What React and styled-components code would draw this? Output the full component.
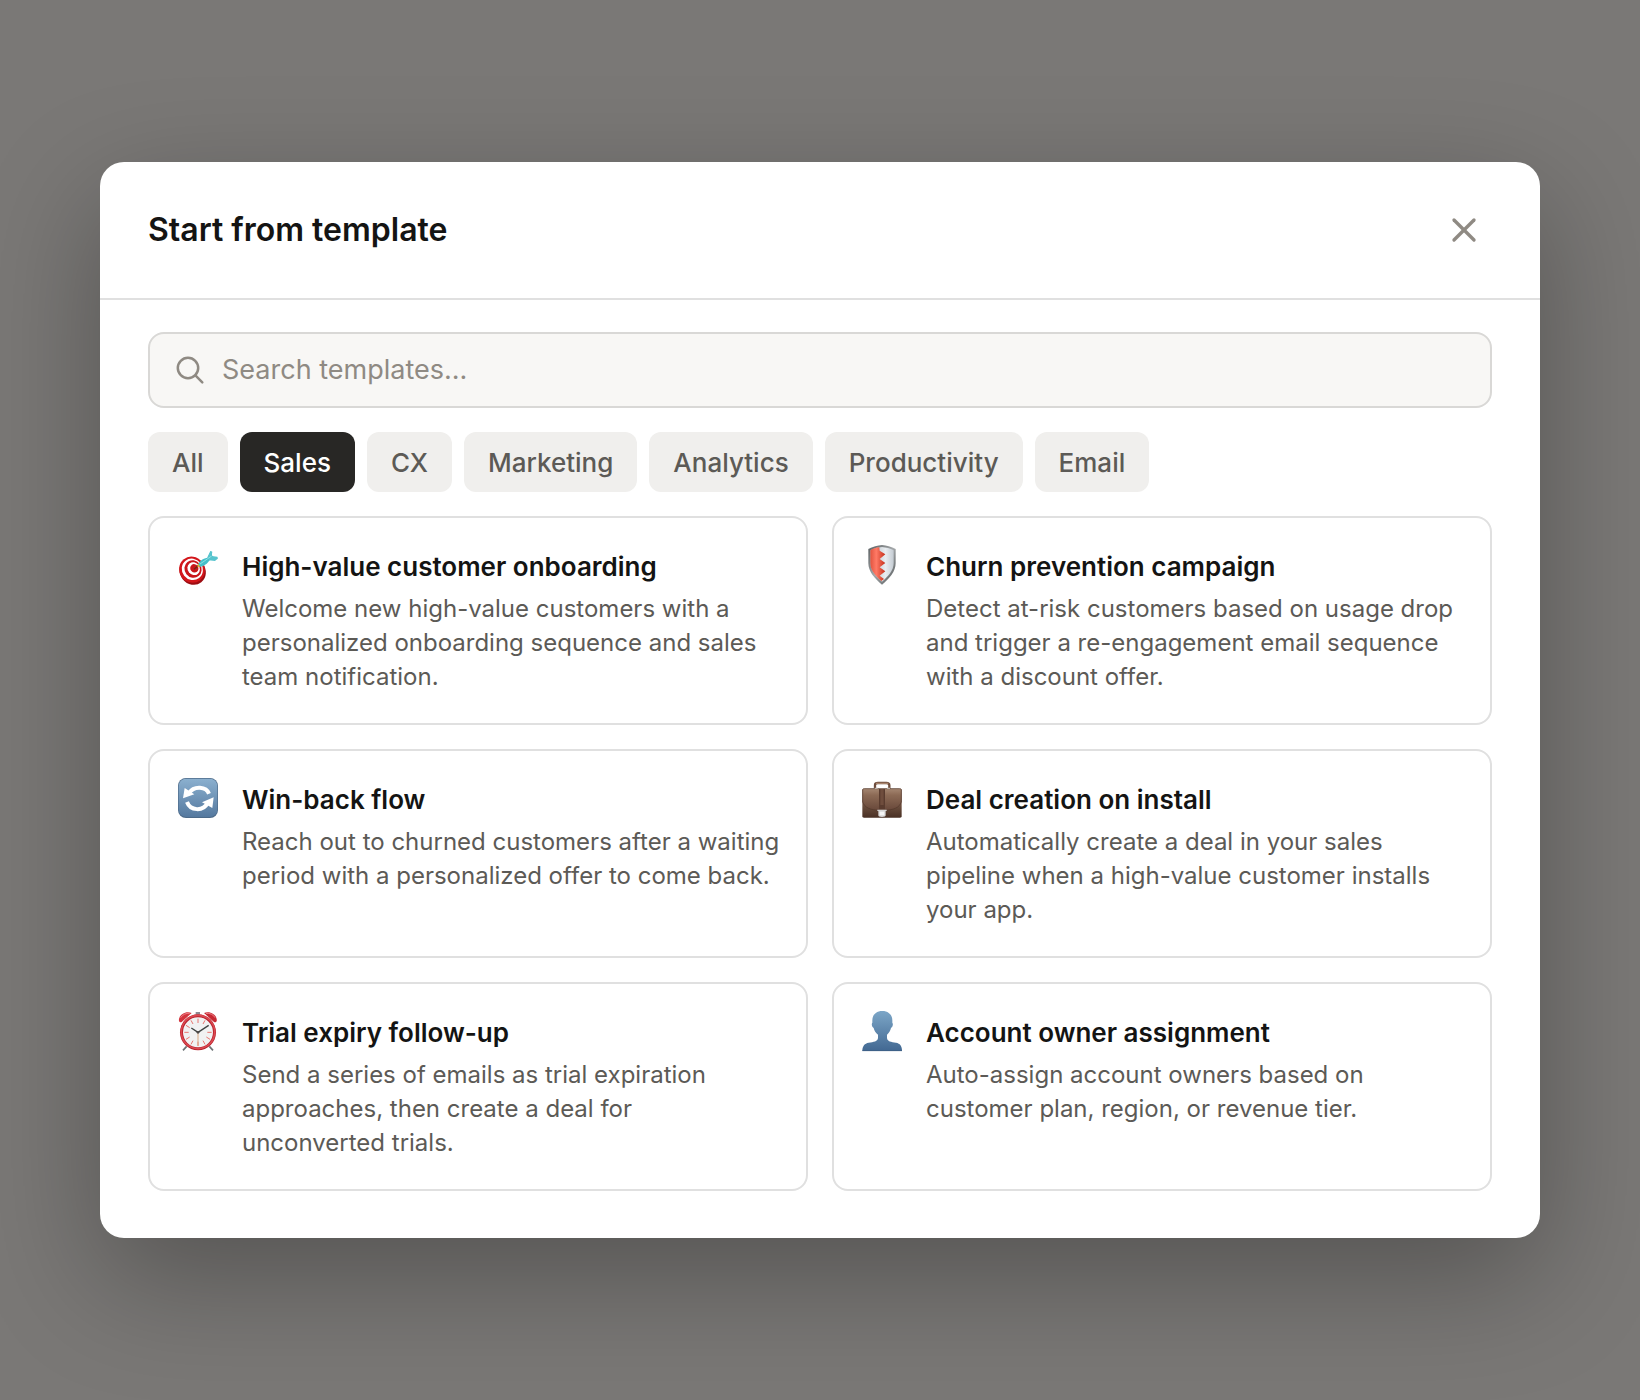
import React, { useState } from 'react';
import styled, { createGlobalStyle } from 'styled-components';
import { X } from 'lucide-react';

const GlobalStyle = createGlobalStyle`
  * {
    box-sizing: border-box;
  }

  body {
    margin: 0;
    font-family: Inter, "Liberation Sans", sans-serif;
    color: #141413;
    background: #7a7876;
  }

  button,
  input {
    font-family: inherit;
  }
`;

const Overlay = styled.div`
  display: flex;
  align-items: center;
  justify-content: center;
  min-height: 100vh;
  padding: 48px 100px;
`;

const Modal = styled.div`
  width: 100%;
  max-width: 1440px;
  background: #ffffff;
  border-radius: 24px;
  box-shadow: 0 40px 120px rgba(0, 0, 0, 0.3);
`;

const ModalHeader = styled.header`
  display: flex;
  align-items: center;
  justify-content: space-between;
  padding: 40px 48px;
  border-bottom: 2px solid #e0e0e0;
`;

const ModalTitle = styled.h1`
  margin: 0;
  font-size: 32px;
  font-weight: 600;
  line-height: 40px;
`;

const CloseButton = styled.button`
  display: flex;
  align-items: center;
  justify-content: center;
  width: 56px;
  height: 56px;
  padding: 0;
  border: none;
  border-radius: 12px;
  background: none;
  color: #8f8a83;
  cursor: pointer;
`;

const ModalBody = styled.div`
  display: flex;
  flex-direction: column;
  gap: 24px;
  padding: 32px 48px 47px;
`;

const SearchBox = styled.label`
  display: flex;
  align-items: center;
  gap: 16px;
  height: 76px;
  padding: 0 24px;
  border: 2px solid #d9d8d6;
  border-radius: 16px;
  background: #f8f7f5;
  color: #8f8a83;
`;

const SearchInput = styled.input`
  flex: 1;
  min-width: 0;
  padding: 0;
  border: none;
  outline: none;
  background: none;
  color: #141413;
  font-size: 27px;
  line-height: 36px;

  &::placeholder {
    color: #8f8a83;
    opacity: 1;
  }
`;

const Categories = styled.div`
  display: flex;
  flex-wrap: wrap;
  gap: 12px;
`;

const CategoryButton = styled.button`
  height: 60px;
  padding: 0 24px;
  border: none;
  border-radius: 12px;
  background: ${props => (props.$active ? '#282725' : '#f0efed')};
  color: ${props => (props.$active ? '#ffffff' : '#5c5a56')};
  font-size: 26px;
  font-weight: 500;
  cursor: pointer;
`;

const TemplateGrid = styled.div`
  display: grid;
  grid-template-columns: 1fr 1fr;
  gap: 24px;
`;

const TemplateCardCss = styled.button`
  display: flex;
  align-items: flex-start;
  gap: 24px;
  padding: 28px 26px 29px 28px;
  border: 2px solid #e0e0e0;
  border-radius: 16px;
  background: #ffffff;
  text-align: left;
  cursor: pointer;
`;

const CardIcon = styled.svg`
  flex: none;
  width: 40px;
  height: 40px;
  overflow: visible;
`;

const CardText = styled.span`
  flex: 1;
  min-width: 0;
`;

const CardTitle = styled.span`
  display: block;
  margin-bottom: 5px;
  color: #141413;
  font-size: 26px;
  font-weight: 600;
  line-height: 41px;
`;

const CardDescription = styled.span`
  display: block;
  color: #5c5a56;
  font-size: 24px;
  line-height: 34px;
`;

function SearchIcon() {
  return (
    <svg width="32" height="32" viewBox="0 0 32 32" fill="none" stroke="currentColor" strokeWidth="2.5" strokeLinecap="round" aria-hidden="true">
      <circle cx="14" cy="14" r="10.2" />
      <path d="M21.4 21.4L28.3 28.3" />
    </svg>
  );
}

function TargetIcon() {
  return (
    <CardIcon viewBox="39 33 120 120" aria-hidden="true">
      <ellipse cx="83" cy="109" rx="38" ry="42" transform="rotate(-38 83 109)" fill="#9c0d12" />
      <ellipse cx="81" cy="104" rx="38" ry="40" transform="rotate(-38 81 104)" fill="#d3161b" />
      <ellipse cx="82" cy="103" rx="31" ry="33" transform="rotate(-38 82 103)" fill="#ffffff" />
      <ellipse cx="84" cy="102" rx="25" ry="27" transform="rotate(-38 84 102)" fill="#c9161b" />
      <ellipse cx="86" cy="101" rx="18" ry="20" transform="rotate(-38 86 101)" fill="#ffffff" />
      <ellipse cx="88" cy="100" rx="12" ry="13" transform="rotate(-38 88 100)" fill="#c9161b" />
      <path d="M87 103L101 91" stroke="#6b2a16" strokeWidth="4" />
      <path d="M97 96L100 85L108 94Z" fill="#e5b51e" />
      <path d="M100 88C104 76 116 70 128 68L134 75C128 86 116 94 106 95Z" fill="#45bfca" />
      <path d="M127 70L138 47L142 64L159 72L132 76Z" fill="#2fa3b1" />
      <path d="M127 67L136 48L142 50L140 63L157 65L159 70L150 78L131 76Z" fill="#57c4ce" />
      <path d="M105 87L140 63" stroke="#8fe0e3" strokeWidth="3" />
    </CardIcon>
  );
}

function ShieldIcon() {
  return (
    <CardIcon viewBox="36 33 120 120" aria-hidden="true">
      <defs>
        <linearGradient id="shield-rim" x1="0" y1="0" x2="1" y2="1">
          <stop offset="0" stopColor="#5a5f61" />
          <stop offset="0.5" stopColor="#a3a7a9" />
          <stop offset="1" stopColor="#4e5355" />
        </linearGradient>
        <linearGradient id="shield-silver" x1="0" y1="0" x2="1" y2="0">
          <stop offset="0" stopColor="#aeb6bd" />
          <stop offset="0.65" stopColor="#e9edf1" />
          <stop offset="1" stopColor="#c5ccd3" />
        </linearGradient>
        <linearGradient id="shield-red" x1="0" y1="0" x2="1" y2="0">
          <stop offset="0" stopColor="#e2543f" />
          <stop offset="0.4" stopColor="#ff7a66" />
          <stop offset="1" stopColor="#c52f1b" />
        </linearGradient>
      </defs>
      <path d="M96 30C109 31 124 35 137 42V84C137 111 117 131 96 149C75 131 55 111 55 84V42C68 35 83 31 96 30Z" fill="url(#shield-rim)" />
      <path d="M96 36C108 37 121 40 131 46V84C131 107 114 124 96 140C78 124 61 107 61 84V46C71 40 84 37 96 36Z" fill="url(#shield-silver)" />
      <path d="M88 37C78 38 69 41 61 46V84C61 107 78 124 94 138L102 132L89 122L106 109L89 97L106 84L89 72L106 58L89 47Z" fill="url(#shield-red)" />
    </CardIcon>
  );
}

function RefreshIcon() {
  return (
    <CardIcon viewBox="39 39 120 120" aria-hidden="true">
      <defs>
        <linearGradient id="refresh-tile" x1="0" y1="0" x2="0" y2="1">
          <stop offset="0" stopColor="#8bb0cf" />
          <stop offset="1" stopColor="#55799f" />
        </linearGradient>
      </defs>
      <rect x="39" y="36" width="120" height="120" rx="24" fill="#4c6a89" />
      <rect x="41" y="38" width="116" height="115" rx="22" fill="url(#refresh-tile)" />
      <path d="M132 83C124 62 88 57 71 82" fill="none" stroke="#ffffff" strokeWidth="12" />
      <path d="M54 97L59 66L88 85Z" fill="#ffffff" />
      <path d="M66 108C76 135 114 137 128 111" fill="none" stroke="#ffffff" strokeWidth="12" />
      <path d="M146 94L142 126L111 109Z" fill="#ffffff" />
    </CardIcon>
  );
}

function BriefcaseIcon() {
  return (
    <CardIcon viewBox="36 39 120 120" aria-hidden="true">
      <defs>
        <linearGradient id="case-body" x1="0" y1="0" x2="0" y2="1">
          <stop offset="0" stopColor="#8d6c58" />
          <stop offset="0.35" stopColor="#80604d" />
          <stop offset="1" stopColor="#493024" />
        </linearGradient>
        <linearGradient id="case-flap" x1="0" y1="0" x2="0" y2="1">
          <stop offset="0" stopColor="#a58671" />
          <stop offset="0.3" stopColor="#8c6a55" />
          <stop offset="1" stopColor="#68483a" />
        </linearGradient>
      </defs>
      <path d="M75 69V57C75 52 79 51 84 51H109C115 51 118 53 118 58V69" fill="none" stroke="#6d4c3c" strokeWidth="7" />
      <path d="M78 52H115" stroke="#a7836c" strokeWidth="4" />
      <path d="M41 68H151C154 68 155 70 155 73V151C155 154 153 155 150 155H42C39 155 37 154 37 151V73C37 70 38 68 41 68Z" fill="url(#case-body)" />
      <path d="M38 72C38 69 40 68 43 68H149C152 68 154 69 154 72V108C148 124 134 133 96 133C58 133 44 124 38 108Z" fill="url(#case-flap)" stroke="#52372b" strokeWidth="2" />
      <rect x="87" y="69" width="18" height="61" fill="#5a3c2f" />
      <rect x="91" y="69" width="10" height="48" fill="#6f4d3d" />
      <path d="M82 131H110V135H107V148C107 152 104 153 96 153C88 153 85 152 85 148V135H82Z" fill="#d6d5d5" />
      <rect x="89" y="137" width="14" height="11" fill="#f6f6f6" />
      <path d="M74 67H83M111 67H120" stroke="#b9afa9" strokeWidth="4" />
    </CardIcon>
  );
}

function AlarmIcon() {
  return (
    <CardIcon viewBox="39 36 120 120" aria-hidden="true">
      <path d="M65 139L54 151M133 139L144 151" stroke="#6c7275" strokeWidth="5" />
      <path d="M92 36H105V44H92Z" fill="#8d8992" />
      <path d="M42 63C39 47 60 31 80 39L50 66Q44 69 42 63Z" fill="#d3343d" />
      <path d="M155 63C158 47 137 31 117 39L147 66Q153 69 155 63Z" fill="#c62832" />
      <path d="M47 53C53 43 64 39 74 40M123 40C134 39 145 43 150 53" fill="none" stroke="#ee8088" strokeWidth="3" />
      <circle cx="99" cy="97" r="54" fill="#b51f2a" />
      <circle cx="99" cy="96" r="50" fill="none" stroke="#dc4850" strokeWidth="5" />
      <circle cx="99" cy="97" r="45" fill="#f1f2f2" />
      <path d="M99 56V69M99 125V138M58 97H71M127 97H140M78 61L84 72M120 61L114 72M63 76L74 83M63 118L74 111M78 133L84 122M120 133L114 122M135 118L124 111" stroke="#e8756f" strokeWidth="3" />
      <path d="M99 97V137" stroke="#d9aa83" strokeWidth="3" />
      <path d="M79 84L99 97L131 76" fill="none" stroke="#3f4443" strokeWidth="4" />
      <circle cx="99" cy="97" r="4" fill="#4c4a49" />
    </CardIcon>
  );
}

function PersonIcon() {
  return (
    <CardIcon viewBox="36 36 120 120" aria-hidden="true">
      <defs>
        <linearGradient id="person-fill" x1="0" y1="0" x2="0" y2="1">
          <stop offset="0" stopColor="#7ca6c7" />
          <stop offset="1" stopColor="#426892" />
        </linearGradient>
      </defs>
      <path d="M97 33C115 33 127 44 127 61V68C130 70 129 82 123 84C121 93 117 99 111 104V113C111 124 124 126 138 128C150 130 156 138 156 153H37C37 138 44 130 56 128C70 126 84 124 84 113V104C77 99 73 93 71 84C65 82 64 70 67 68V61C67 44 79 33 97 33Z" fill="url(#person-fill)" />
      <path d="M37 152H156" stroke="#3c5c80" strokeWidth="2" />
    </CardIcon>
  );
}

const categories = ['All', 'Sales', 'CX', 'Marketing', 'Analytics', 'Productivity', 'Email'];

const templates = [
  {
    title: 'High-value customer onboarding',
    description: 'Welcome new high-value customers with a personalized onboarding sequence and sales team notification.',
    Icon: TargetIcon,
  },
  {
    title: 'Churn prevention campaign',
    description: 'Detect at-risk customers based on usage drop and trigger a re-engagement email sequence with a discount offer.',
    Icon: ShieldIcon,
  },
  {
    title: 'Win-back flow',
    description: 'Reach out to churned customers after a waiting period with a personalized offer to come back.',
    Icon: RefreshIcon,
  },
  {
    title: 'Deal creation on install',
    description: 'Automatically create a deal in your sales pipeline when a high-value customer installs your app.',
    Icon: BriefcaseIcon,
  },
  {
    title: 'Trial expiry follow-up',
    description: 'Send a series of emails as trial expiration approaches, then create a deal for unconverted trials.',
    Icon: AlarmIcon,
  },
  {
    title: 'Account owner assignment',
    description: 'Auto-assign account owners based on customer plan, region, or revenue tier.',
    Icon: PersonIcon,
  },
];

function TemplateCard({ template }) {
  const { title, description, Icon } = template;
  return (
    <TemplateCardCss type="button">
      <Icon />
      <CardText>
        <CardTitle>{title}</CardTitle>
        <CardDescription>{description}</CardDescription>
      </CardText>
    </TemplateCardCss>
  );
}

function App() {
  const [category, setCategory] = useState('Sales');
  const [query, setQuery] = useState('');

  const visible = templates.filter(template =>
    template.title.toLowerCase().includes(query.toLowerCase())
  );

  return (
    <>
      <GlobalStyle />
      <Overlay>
        <Modal role="dialog" aria-modal="true" aria-labelledby="modal-title">
          <ModalHeader>
            <ModalTitle id="modal-title">Start from template</ModalTitle>
            <CloseButton type="button" aria-label="Close">
              <X size={40} strokeWidth={2} />
            </CloseButton>
          </ModalHeader>
          <ModalBody>
            <SearchBox>
              <SearchIcon />
              <SearchInput
                type="text"
                aria-label="Search templates"
                placeholder="Search templates..."
                value={query}
                onChange={e => setQuery(e.target.value)}
              />
            </SearchBox>
            <Categories>
              {categories.map(name => (
                <CategoryButton
                  key={name}
                  type="button"
                  $active={name === category}
                  aria-pressed={name === category}
                  onClick={() => setCategory(name)}
                >
                  {name}
                </CategoryButton>
              ))}
            </Categories>
            <TemplateGrid>
              {visible.map(template => (
                <TemplateCard key={template.title} template={template} />
              ))}
            </TemplateGrid>
          </ModalBody>
        </Modal>
      </Overlay>
    </>
  );
}

export default App;
